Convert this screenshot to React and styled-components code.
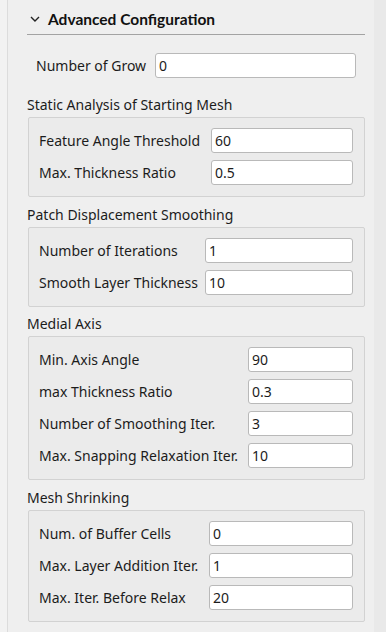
import React from 'react';
import styled, { createGlobalStyle } from 'styled-components';

const GlobalStyle = createGlobalStyle`
  html, body {
    margin: 0;
    padding: 0;
    background: #efefef;
  }
  body {
    font-family: "Noto Sans", "DejaVu Sans", sans-serif;
    font-size: 14px;
    color: #1c1c1c;
  }
`;

const Window = styled.div`
  display: flex;
  width: 386px;
  height: 632px;
  overflow: hidden;
  background: #f1f1f1;
`;

const Gutter = styled.div`
  width: 7px;
  flex: none;
  background: #f2f2f2;
  border-right: 1px solid #dcdcdc;
`;

const Panel = styled.div`
  flex: 1;
  background: #efefef;
  padding: 0 9px 0 19px;
`;

const ScrollTrack = styled.div`
  width: 12px;
  flex: none;
  background: #e9e9e9;
`;

const Header = styled.div`
  display: flex;
  align-items: center;
  gap: 8px;
  height: 35px;
  padding: 3px 0 0 3px;
  box-sizing: border-box;
  border-bottom: 1px solid #a3a3a3;
  font-family: Lato, "Noto Sans", sans-serif;
  font-weight: 700;
  font-size: 15.5px;
  color: #111;
`;

const Chevron = styled.svg`
  width: 10px;
  height: 6px;
  flex: none;
`;

const Section = styled.section`
  margin-top: ${p => p.$top}px;
`;

const Title = styled.div`
  line-height: 17px;
  height: 17px;
  margin-bottom: 4px;
`;

const Box = styled.div`
  display: grid;
  grid-template-columns: ${p => p.$label}px 1fr;
  row-gap: 7px;
  align-items: center;
  margin-left: 1px;
  padding: 10px 11px 11px 10px;
  background: #ebebeb;
  border: 1px solid #d2d2d2;
  border-radius: 2px;
`;

const Row = styled.div`
  display: grid;
  grid-template-columns: ${p => p.$label}px 1fr;
  align-items: center;
  margin-top: 18px;
  padding: 0 9px 0 9px;
`;

const Label = styled.label`
  white-space: nowrap;
  line-height: 25px;
`;

const Field = styled.input`
  box-sizing: border-box;
  height: 25px;
  width: 100%;
  margin: 0;
  padding: 0 3px;
  font: inherit;
  color: #1c1c1c;
  background: #fff;
  border: 1px solid #b9b9b9;
  border-radius: 3px;
  outline: none;
`;

const groups = [
  {
    title: 'Static Analysis of Starting Mesh',
    label: 172,
    top: 18,
    rows: [
      ['Feature Angle Threshold', '60'],
      ['Max. Thickness Ratio', '0.5'],
    ],
  },
  {
    title: 'Patch Displacement Smoothing',
    label: 166,
    top: 9,
    rows: [
      ['Number of Iterations', '1'],
      ['Smooth Layer Thickness', '10'],
    ],
  },
  {
    title: 'Medial Axis',
    label: 209,
    top: 8,
    rows: [
      ['Min. Axis Angle', '90'],
      ['max Thickness Ratio', '0.3'],
      ['Number of Smoothing Iter.', '3'],
      ['Max. Snapping Relaxation Iter.', '10'],
    ],
  },
  {
    title: 'Mesh Shrinking',
    label: 170,
    top: 9,
    rows: [
      ['Num. of Buffer Cells', '0'],
      ['Max. Layer Addition Iter.', '1'],
      ['Max. Iter. Before Relax', '20'],
    ],
  },
];

export default function App() {
  return (
    <>
      <GlobalStyle />
      <Window>
        <Gutter />
        <Panel>
          <Header>
            <Chevron viewBox="0 0 10 6">
              <polyline points="1,1 5,5 9,1" fill="none" stroke="#222" strokeWidth="1.4" />
            </Chevron>
            Advanced Configuration
          </Header>
          <Row $label={119}>
            <Label>Number of Grow</Label>
            <Field defaultValue="0" />
          </Row>
          {groups.map((g, i) => (
            <Section key={g.title} $top={i === 0 ? 18 : g.top}>
              <Title>{g.title}</Title>
              <Box $label={g.label}>
                {g.rows.map(([name, value]) => (
                  <React.Fragment key={name}>
                    <Label>{name}</Label>
                    <Field defaultValue={value} />
                  </React.Fragment>
                ))}
              </Box>
            </Section>
          ))}
        </Panel>
        <ScrollTrack />
      </Window>
    </>
  );
}
